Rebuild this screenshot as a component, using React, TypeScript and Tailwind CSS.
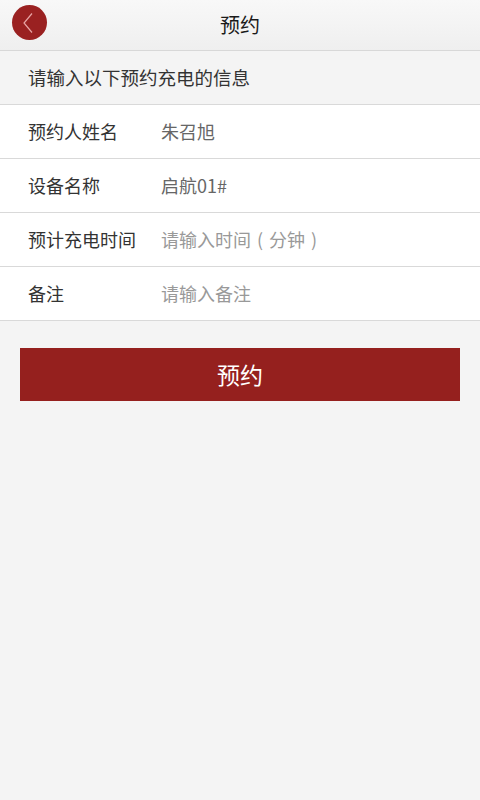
const rows = [
  { label: "预约人姓名", value: <>朱召旭</>, placeholder: false },
  { label: "设备名称", value: <>启航01#</>, placeholder: false },
  {
    label: "预计充电时间",
    value: (
      <>
        请输入时间
        <span className="inline-block w-[18px] text-center">(</span>
        分钟
        <span className="inline-block w-[18px] text-center">)</span>
      </>
    ),
    placeholder: true,
  },
  { label: "备注", value: <>请输入备注</>, placeholder: true },
];

export default function App() {
  return (
    <div className="min-h-[800px] w-[480px] bg-[#f4f4f4] font-['Noto_Sans_CJK_SC','Noto_Sans',sans-serif]">
      {/* header */}
      <div className="relative flex h-[51px] items-center justify-center border-b border-[#d8d8d8] bg-gradient-to-b from-[#f8f8f8] to-[#efefef]">
        <button className="absolute left-[12px] top-[5px] flex h-[35px] w-[35px] items-center justify-center rounded-full bg-[#9a2121]">
          <svg width="14" height="22" viewBox="0 0 14 22" fill="none" className="-ml-[3px]">
            <path d="M11 1.5 L3 11 L11 20.5" stroke="#e8a5a5" strokeWidth="1.2" />
          </svg>
        </button>
        <h1 className="text-[20px] leading-none text-[#1a1a1a]">预约</h1>
      </div>

      {/* hint */}
      <div className="flex h-[54px] items-center border-b border-[#d9d9d9] pl-[28px] text-[18.5px] text-[#333]">
        请输入以下预约充电的信息
      </div>

      {/* form */}
      <div className="bg-white">
        {rows.map((r) => (
          <div
            key={r.label}
            className="flex h-[54px] items-center border-b border-[#d9d9d9] text-[18px]"
          >
            <span className="w-[161px] pl-[28px] text-[#333]">{r.label}</span>
            <span className={r.placeholder ? "text-[#999]" : "text-[#666]"}>{r.value}</span>
          </div>
        ))}
      </div>

      <div className="px-[20px] pt-[27px]">
        <button className="flex h-[53px] w-full items-center justify-center bg-[#95201e] text-[23px] text-white">
          预约
        </button>
      </div>
    </div>
  );
}
